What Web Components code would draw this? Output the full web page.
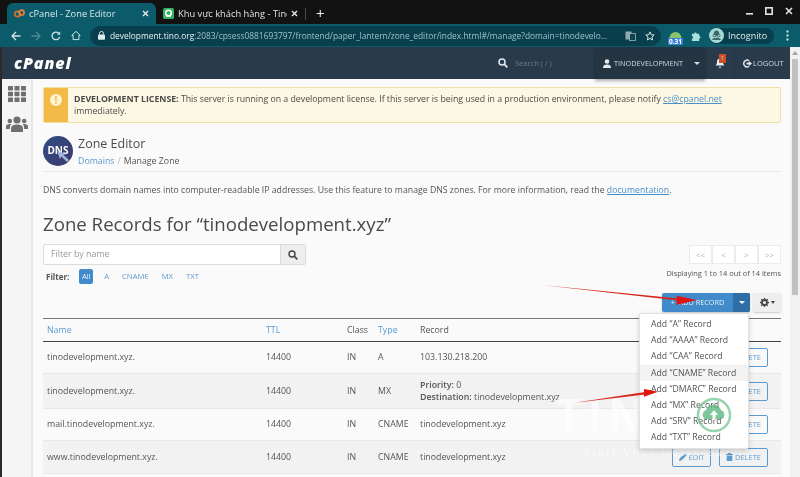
<!DOCTYPE html>
<html>
<head>
<meta charset="utf-8">
<title>cPanel - Zone Editor</title>
<style>
  html, body { margin: 0; padding: 0; height: 477px; overflow: hidden; background: #fafafa; }
  body { font-family: "Open Sans", sans-serif; display: flex; flex-direction: column; filter: blur(.3px); }
</style>
</head>
<body>
<browser-tabs></browser-tabs>
<browser-toolbar></browser-toolbar>
<cp-page>
  <cp-header></cp-header>
  <cp-sidebar slot="side"></cp-sidebar>
  <zone-editor slot="main"></zone-editor>
</cp-page>

<script>
class BrowserTabs extends HTMLElement {
  constructor() {
    super();
    this.attachShadow({mode: 'open'});
    this.shadowRoot.innerHTML = `
      <style>
        :host { display: flex; height: 24px; background: #121212; color: #e6eef0; font: 9.3px "Open Sans", sans-serif; padding-left: 7px; align-items: flex-end; flex: none; }
        .tab { display: flex; align-items: center; height: 21px; padding: 0 7px; box-sizing: border-box; }
        .tab.on { width: 149px; background: #0c5b6b; border-radius: 6px 6px 0 0; color: #d8e8ea; }
        .tab.off { width: 149px; color: #dfe3e3; }
        .label { flex: 1; white-space: nowrap; overflow: hidden; margin: 0 4px; }
        .x { flex: none; }
        .sep { width: 1px; height: 12px; background: #4a4a4a; margin: 0 0 4px 0; }
        .plus { color: #eee; font-size: 15px; line-height: 1; margin: 0 0 3px 10px; }
        .win { margin-left: auto; display: flex; align-items: center; gap: 12px; padding: 0 7px 0 0; height: 22px; align-self: flex-start; }
        svg { display: block; flex: none; }
      </style>
      <div class="tab on">
        <svg width="11" height="9" viewBox="0 0 11 9"><circle cx="3.4" cy="5" r="2.7" fill="none" stroke="#dd6f2e" stroke-width="1.7"/><circle cx="7.6" cy="3.6" r="2.5" fill="none" stroke="#e8813a" stroke-width="1.7"/></svg>
        <span class="label">cPanel - Zone Editor</span>
        <svg class="x" width="7" height="7" viewBox="0 0 7 7"><path d="M1 1l5 5M6 1l-5 5" stroke="#e8eeee" stroke-width="1.300"/></svg>
      </div>
      <div class="tab off">
        <svg width="11" height="11" viewBox="0 0 11 11"><rect width="11" height="11" rx="1.5" fill="#35b060"/><circle cx="5.5" cy="5" r="2.8" fill="none" stroke="#fff" stroke-width="1.5"/><rect x="3" y="7.4" width="5" height="1.4" fill="#fff"/></svg>
        <span class="label">Khu vực khách hàng - Tino</span>
        <svg class="x" width="7" height="7" viewBox="0 0 7 7"><path d="M1 1l5 5M6 1l-5 5" stroke="#e8eeee" stroke-width="1.300"/></svg>
      </div>
      <div class="sep"></div>
      <div class="plus">+</div>
      <div class="win">
        <svg width="7" height="8" viewBox="0 0 7 8"><rect y="6" width="7" height="1.600" fill="#e4e4e4"/></svg>
        <svg width="8" height="8" viewBox="0 0 8 8"><rect x=".8" y=".8" width="6.400" height="6.400" fill="none" stroke="#e4e4e4" stroke-width="1.600"/></svg>
        <svg width="8" height="8" viewBox="0 0 8 8"><path d="M1 1l6 6M7 1l-6 6" stroke="#e4e4e4" stroke-width="1.600"/></svg>
      </div>`;
  }
}
customElements.define('browser-tabs', BrowserTabs);

class BrowserToolbar extends HTMLElement {
  constructor() {
    super();
    this.attachShadow({mode: 'open'});
    this.shadowRoot.innerHTML = `
      <style>
        :host { display: flex; align-items: center; height: 23px; background: #0c5b6b; flex: none; font: 8.4px "Open Sans", sans-serif; color: #9fc3ca; padding-left: 11px; box-sizing: border-box; }
        svg { display: block; flex: none; }
        .nav { display: flex; align-items: center; gap: 10px; }
        .omni { display: flex; align-items: center; width: 571px; height: 20px; margin-left: 9px; padding: 0 6px 0 8px; background: #093f4d; border-radius: 10px; box-sizing: border-box; flex: none; }
        .url { flex: 1; min-width: 0; white-space: nowrap; overflow: hidden; margin-left: 5px; color: #9cc0c8; }
        .url b { font-weight: 400; color: #e6f0f2; }
        .omni .end { display: flex; gap: 9px; align-items: center; flex: none; }
        .ext { position: relative; margin-left: 7px; width: 15px; height: 19px; flex: none; }
        .ext span { position: absolute; left: 0; bottom: 0; width: 15px; height: 7px; background: #3b7fd9; color: #fff; font: 700 6.5px/7px "Open Sans", sans-serif; text-align: center; }
        .who { display: flex; align-items: center; gap: 4px; margin-left: 8px; height: 16px; width: 65px; flex: none; background: #093f4d; border-radius: 9px; color: #dfe9ea; font-size: 9px; box-sizing: border-box; }
        .dots { margin-left: 12px; }
      </style>
      <div class="nav">
        <svg width="10" height="10" viewBox="0 0 10 10"><path d="M9.500 5H1.500M5 1 1 5l4 4" fill="none" stroke="#cfe3e6" stroke-width="1.300"/></svg>
        <svg width="10" height="10" viewBox="0 0 10 10"><path d="M.5 5h8M5 1l4 4-4 4" fill="none" stroke="#4e8a96" stroke-width="1.300"/></svg>
        <svg width="10" height="10" viewBox="0 0 10 10"><path d="M8.600 5.800A3.800 3.800 0 1 1 7.600 2.200" fill="none" stroke="#cfe3e6" stroke-width="1.300"/><path d="M9.200 .5v3.200H6" fill="#cfe3e6"/></svg>
        <svg width="10" height="11" viewBox="0 0 11 11"><path d="M5.500 1 .8 5.400h1.500V10h6.400V5.400h1.500z" fill="none" stroke="#cfe3e6" stroke-width="1.100"/></svg>
      </div>
      <div class="omni">
        <svg width="7" height="9" viewBox="0 0 7 9"><rect y="3.400" width="7" height="5.400" rx=".8" fill="#dfeaec"/><path d="M1.600 3.600V2.300a1.900 1.900 0 0 1 3.800 0v1.300" fill="none" stroke="#dfeaec"/></svg>
        <span class="url"><b>development.tino.org</b>:2083/cpsess0881693797/frontend/paper_lantern/zone_editor/index.html#/manage?domain=tinodevelo...</span>
        <span class="end">
          <svg width="11" height="10" viewBox="0 0 11 10"><rect x=".5" y=".5" width="6" height="8" fill="#8fa9ae"/><rect x="4.500" y="2.500" width="6" height="7" fill="#0a4351" stroke="#9fb8bd" stroke-width=".8"/></svg>
          <svg width="10" height="10" viewBox="0 0 10 10"><path d="M5 .9 6.200 3.700l3 .3-2.300 2 .7 3L5 7.400 2.400 9l.7-3L.8 4l3-.3z" fill="none" stroke="#dbe7e9" stroke-width="1"/></svg>
        </span>
      </div>
      <div class="ext">
        <svg width="15" height="12" viewBox="0 0 15 12"><path d="M1.500 12a6 6 0 0 1 12 0z" fill="#8ac36a"/></svg>
        <span>0.31</span>
      </div>
      <svg style="margin-left:8px" width="10" height="10" viewBox="0 0 11 11"><path d="M1 3h2.400a1.400 1.400 0 1 1 2.800 0H9v2.400a1.400 1.400 0 1 1 0 2.800V11H1V8.600a1.400 1.400 0 1 0 0-2.800z" fill="#a6e3df"/></svg>
      <div class="who">
        <svg width="15" height="15" viewBox="0 0 15 15"><circle cx="7.500" cy="7.500" r="7.500" fill="#a4dbd6"/><circle cx="7.500" cy="5" r="2.600" fill="#3f6a6c"/><path d="M3 12c.6-3 8.400-3 9 0z" fill="#3f6a6c"/><circle cx="5.500" cy="7.500" r="1.500" fill="none" stroke="#2e5254" stroke-width=".8"/><circle cx="9.500" cy="7.500" r="1.500" fill="none" stroke="#2e5254" stroke-width=".8"/></svg>
        <span>Incognito</span>
      </div>
      <svg class="dots" width="3" height="11" viewBox="0 0 3 11"><circle cx="1.500" cy="1.500" r="1.200" fill="#a6dcd8"/><circle cx="1.500" cy="5.500" r="1.200" fill="#a6dcd8"/><circle cx="1.500" cy="9.500" r="1.200" fill="#a6dcd8"/></svg>`;
  }
}
customElements.define('browser-toolbar', BrowserToolbar);

class CpPage extends HTMLElement {
  constructor() {
    super();
    this.attachShadow({mode: 'open'});
    this.shadowRoot.innerHTML = `
      <style>
        :host { display: flex; flex: 1; min-height: 0; overflow: hidden; border-left: 2px solid #2b2b2b; }
        .col { flex: 1; min-width: 0; display: flex; flex-direction: column; }
        .body { flex: 1; min-height: 0; display: flex; }
        .bar { width: 10px; flex: none; background: #f1f1f1; padding: 2px 2px 0; box-sizing: border-box; }
        .bar i { display: block; width: 0; height: 0; margin: 2px auto 4px; border: 3px solid transparent; border-top: 0; border-bottom: 4px solid #a3a3a3; }
        .bar b { display: block; height: 236px; background: #c1c1c1; }
      </style>
      <div class="col">
        <slot></slot>
        <div class="body"><slot name="side"></slot><slot name="main"></slot></div>
      </div>
      <div class="bar"><i></i><b></b></div>`;
  }
}
customElements.define('cp-page', CpPage);

class CpHeader extends HTMLElement {
  constructor() {
    super();
    this.attachShadow({mode: 'open'});
    this.shadowRoot.innerHTML = `
      <style>
        :host { display: flex; align-items: stretch; height: 32px; background: #293a4b; color: #d5dbe0; font-size: 7.500px; flex: none; }
        .logo { color: #fff; font: italic 800 16px/32px "Open Sans", sans-serif; letter-spacing: .9px; margin-left: 12px; }
        .search { display: flex; align-items: center; margin-left: auto; color: #6f7d8a; }
        .search svg { margin-right: 7px; }
        .search span { width: 80px; }
        .user { display: flex; align-items: center; width: 110px; padding-left: 8px; box-sizing: border-box; background: #243443; box-shadow: 0 2px 3px rgba(0,0,0,.3); color: #d5dbe0; gap: 3px; font-size: 7.300px; }
        .user i { margin: 0 0 0 8px; width: 0; height: 0; border: 3px solid transparent; border-bottom: 0; border-top: 3px solid #d5dbe0; }
        .bell { position: relative; display: flex; align-items: center; justify-content: center; width: 29px; border-right: 1px solid #243443; }
        .bell span { position: absolute; left: 14px; top: 7px; width: 7px; height: 9px; background: #c9502a; color: #f5d5c5; font-size: 5px; line-height: 9px; text-align: center; }
        .logout { display: flex; align-items: center; gap: 1px; width: 55px; padding-left: 8px; box-sizing: border-box; }
        svg { display: block; flex: none; }
      </style>
      <div class="logo">cPanel</div>
      <div class="search">
        <svg width="10" height="10" viewBox="0 0 10 10"><circle cx="4" cy="4" r="3" fill="none" stroke="#e4e8ec" stroke-width="1.500"/><path d="M6.200 6.200 9.300 9.300" stroke="#e4e8ec" stroke-width="1.800"/></svg>
        <span>Search ( / )</span>
      </div>
      <div class="user">
        <svg width="8" height="9" viewBox="0 0 8 9"><circle cx="4" cy="2.500" r="2.300" fill="#e4e8ec"/><path d="M0 9c0-3 2-3.500 4-3.500S8 6 8 9z" fill="#e4e8ec"/></svg>
        <span>TINODEVELOPMENT</span><i></i>
      </div>
      <div class="bell">
        <svg width="10" height="11" viewBox="0 0 10 11"><path d="M5 .5c2.200 0 3 1.700 3 3.500 0 2 .8 2.700 1.500 3.500h-9C1.200 6.700 2 6 2 4 2 2.200 2.800.5 5 .5z" fill="#eef1f3"/><path d="M3.800 8.700h2.400L5 10.500z" fill="#eef1f3"/></svg>
        <span>1</span>
      </div>
      <div class="logout">
        <svg width="9" height="9" viewBox="0 0 9 9"><path d="M6 1.600A3.400 3.400 0 1 0 6 7.400" fill="none" stroke="#e4e8ec" stroke-width="1.400"/><path d="M3.500 3.500h2.500V2l3 2.500-3 2.500V5.500H3.500z" fill="#e4e8ec"/></svg>
        <span>LOGOUT</span>
      </div>`;
  }
}
customElements.define('cp-header', CpHeader);

class CpSidebar extends HTMLElement {
  constructor() {
    super();
    this.attachShadow({mode: 'open'});
    this.shadowRoot.innerHTML = `
      <style>
        :host { display: flex; flex-direction: column; align-items: center; gap: 14px; width: 31px; height: 100%; padding: 7px 0 0 0; box-sizing: border-box; background: #f5f5f5; border-right: 2px solid #e6e6e6; flex: none; }
        svg { display: block; }
      </style>
      <svg width="18" height="16" viewBox="0 0 18 16" fill="#6f6f6f">
        <rect width="5" height="4.400" rx=".6"/><rect x="6.500" width="5" height="4.400" rx=".6"/><rect x="13" width="5" height="4.400" rx=".6"/>
        <rect y="5.800" width="5" height="4.400" rx=".6"/><rect x="6.500" y="5.800" width="5" height="4.400" rx=".6"/><rect x="13" y="5.800" width="5" height="4.400" rx=".6"/>
        <rect y="11.600" width="5" height="4.400" rx=".6"/><rect x="6.500" y="11.600" width="5" height="4.400" rx=".6"/><rect x="13" y="11.600" width="5" height="4.400" rx=".6"/>
      </svg>
      <svg width="22" height="16" viewBox="0 0 22 16" fill="#6f6f6f">
        <circle cx="11" cy="4" r="3.600"/><circle cx="3.800" cy="5" r="2.300"/><circle cx="18.200" cy="5" r="2.300"/>
        <path d="M5 16v-3.500C5 10 7 8.500 11 8.500s6 1.500 6 4V16z"/><path d="M0 13v-2.500C0 9 1.500 8 3.800 8c.7 0 1.200.1 1.600.3C4.300 9.300 3.800 10.700 3.800 13z"/><path d="M22 13v-2.500C22 9 20.500 8 18.200 8c-.7 0-1.200.1-1.600.3 1.100 1 1.600 2.400 1.600 4.700z"/>
      </svg>`;
  }
}
customElements.define('cp-sidebar', CpSidebar);

class NoticeBar extends HTMLElement {
  constructor() {
    super();
    this.attachShadow({mode: 'open'});
    this.shadowRoot.innerHTML = `
      <style>
        :host { display: flex; height: 36px; box-sizing: border-box; border: 1px solid #f0dfa0; border-radius: 2px; background: #fdf8e3; color: #4a4a4a; font-size: 8.750px; line-height: 11.500px; }
        .ic { width: 24px; flex: none; background: #f2bb47; display: flex; justify-content: center; padding-top: 6px; box-sizing: border-box; }
        .ic span { width: 12px; height: 12px; border-radius: 50%; background: #fdf3d0; color: #f2bb47; font: 700 10px/12px "Open Sans", sans-serif; text-align: center; }
        .tx { padding: 6px 50px 0 6px; }
      </style>
      <div class="ic"><span>!</span></div>
      <div class="tx"><slot></slot></div>`;
  }
}
customElements.define('notice-bar', NoticeBar);

class ZoneRow extends HTMLElement {
  constructor() {
    super();
    this.attachShadow({mode: 'open'});
    const h = this.getAttribute('h') || 32;
    const on = this.hasAttribute('alt');
    this.shadowRoot.innerHTML = `
      <style>
        :host { display: grid; grid-template-columns: 219px 81px 31px 42px 1fr auto; align-items: center; height: ${h}px; box-sizing: border-box; border-bottom: 1px solid #e8e8e8; background: ${on ? '#f2f2f2' : 'transparent'}; font-size: 8.800px; line-height: 12.500px; color: #555; }
        .c { padding-left: 4px; white-space: nowrap; }
        .acts { display: flex; gap: 8px; margin-right: 13px; }
        .btn { box-sizing: border-box; height: 19px; display: flex; align-items: center; justify-content: center; gap: 2px; border: 1px solid #5c9bd1; border-radius: 2px; color: #5c9bd1; font-size: 7.500px; }
        .edit { width: 39px; }
        .del { width: 49px; }
        svg { display: block; flex: none; }
      </style>
      <div class="c">${this.getAttribute('name')}</div>
      <div class="c">14400</div>
      <div class="c">IN</div>
      <div class="c">${this.getAttribute('type')}</div>
      <div class="c"><slot></slot></div>
      <div class="acts">
        <div class="btn edit"><svg width="8" height="8" viewBox="0 0 8 8"><path d="M0 8l.6-2.400L5.800.4l1.800 1.800-5.200 5.200z" fill="#5c9bd1"/></svg>EDIT</div>
        <div class="btn del"><svg width="7" height="8" viewBox="0 0 7 8"><path d="M2.200 0h2.600l.4 1H7v1H0V1h1.800zM.7 2.500h5.600V8H.7z" fill="#5c9bd1"/></svg>DELETE</div>
      </div>`;
  }
}
customElements.define('zone-row', ZoneRow);

class RecordMenu extends HTMLElement {
  constructor() {
    super();
    this.attachShadow({mode: 'open'});
    const types = ['A', 'AAAA', 'CAA', 'CNAME', 'DMARC', 'MX', 'SRV', 'TXT'];
    const items = types.map(t => `<div class="${t === 'CNAME' ? 'hi' : ''}">Add “${t}” Record</div>`).join('');
    this.shadowRoot.innerHTML = `
      <style>
        :host { position: absolute; left: -23px; top: 20px; width: 110px; padding: 2px 0; background: #fff; border: 1px solid #e2e2e2; border-radius: 2px; box-shadow: 0 2px 5px rgba(0,0,0,.18); box-sizing: border-box; font-size: 8.700px; color: #555; z-index: 3; }
        div { height: 16.200px; line-height: 16.200px; padding-left: 11px; white-space: nowrap; }
        .hi { background: #f3f3f3; }
      </style>
      ${items}`;
  }
}
customElements.define('record-menu', RecordMenu);

class ZoneEditor extends HTMLElement {
  constructor() {
    super();
    this.attachShadow({mode: 'open'});
    this.shadowRoot.innerHTML = `
      <style>
        :host { display: block; flex: 1; min-width: 0; position: relative; padding: 8px 9px 0 10px; box-sizing: border-box; color: #555; font-size: 8.800px; overflow: hidden; }
        .title { display: flex; gap: 5px; height: 34px; align-items: center; margin-top: 11px; padding-bottom: 3px; border-bottom: 1px solid #e8e8e8; }
        .dns { position: relative; width: 30px; height: 30px; border-radius: 50%; flex: none; background: linear-gradient(135deg, #2f4d84, #3a3f73 70%); color: #fff; font: 700 10px/28px "Open Sans", sans-serif; text-align: center; overflow: hidden; }
        .dns svg { position: absolute; left: 14px; top: 15px; }
        h2 { margin: 0; font-weight: 400; font-size: 12.500px; line-height: 18px; color: #4b4b4b; }
        .crumb { margin-top: 2px; line-height: 13px; color: #555; }
        .crumb a { color: #5c9bd1; }
        .crumb i { font-style: normal; color: #bbb; margin: 0 3px; }
        .desc { margin: 12px 0 0; line-height: 13px; white-space: nowrap; font-size: 8.720px; }
        .desc a { color: #4a90c8; text-decoration: underline; }
        h1 { margin: 13px 0 0; font-weight: 400; font-size: 18.650px; line-height: 28px; color: #4a4a4a; white-space: nowrap; }
        .tools { display: flex; justify-content: space-between; margin-top: 6px; }
        .search { display: flex; width: 263px; height: 21px; box-sizing: border-box; border: 1px solid #dcdcdc; border-radius: 2px; background: #fff; color: #999; }
        .search span { flex: 1; padding-left: 7px; line-height: 19px; }
        .search b { width: 24px; background: #eee; border-left: 1px solid #dcdcdc; display: flex; align-items: center; justify-content: center; }
        .filter { display: flex; align-items: center; margin: 3.500px 0 0 3px; height: 15px; font-size: 7.700px; color: #5c9bd1; }
        .filter strong { color: #555; font-size: 8px; margin-right: 10px; }
        .filter .on { background: #428bca; color: #e8f1f8; padding: 0 2.500px; height: 15px; line-height: 15px; border-radius: 2px; margin-right: 11px; }
        .filter span { margin-right: 13px; }
        .right { text-align: right; width: 130px; padding-top: 1px; }
        .pager { display: flex; justify-content: flex-end; }
        .pager span { width: 23px; height: 19px; box-sizing: border-box; border: 1px solid #ececec; background: #fff; color: #b5b5b5; font-size: 8px; line-height: 17px; text-align: center; }
        .shown { margin-top: 3px; font-size: 7.400px; line-height: 13px; white-space: nowrap; }
        .actions { display: flex; justify-content: flex-end; gap: 3px; margin-top: 9.500px; }
        .add { position: relative; display: flex; height: 19px; width: 88px; color: #e8f1f8; font-size: 7.300px; border-radius: 2px; background: #428bca; box-shadow: 0 1px 2px rgba(0,0,0,.2); }
        .add span { flex: 1; line-height: 19px; text-align: center; white-space: nowrap; }
        .add u { width: 17px; background: #2f6fa8; border-radius: 0 2px 2px 0; display: flex; align-items: center; justify-content: center; }
        .add u::after { content: ""; border: 3px solid transparent; border-bottom: 0; border-top: 3px solid #fff; }
        .gear { width: 28px; height: 19px; background: #eee; border-radius: 2px; display: flex; align-items: center; justify-content: center; gap: 2px; box-shadow: 0 1px 2px rgba(0,0,0,.2); }
        .gear::after { content: ""; border: 2.500px solid transparent; border-bottom: 0; border-top: 3px solid #444; }
        .head { display: grid; grid-template-columns: 219px 81px 31px 42px 1fr; align-items: center; height: 24px; margin-top: 6px; box-sizing: border-box; border-top: 1px solid #777; border-bottom: 1px solid #444; }
        .head div { padding-left: 4px; }
        .head .s { color: #5c9bd1; }
        svg { display: block; }
        .marks { position: absolute; left: 0; top: 0; width: 757px; height: 398px; pointer-events: none; z-index: 5; }
        .brand { position: absolute; left: 523px; top: 312px; color: rgba(255,255,255,.6); font: 700 44px/46px "Open Sans", sans-serif; letter-spacing: 6px; z-index: 1; white-space: nowrap; }
        .slog { position: absolute; left: 550px; top: 365px; color: rgba(255,255,255,.6); font: 13px/16px "Liberation Serif", serif; letter-spacing: 2px; z-index: 1; white-space: nowrap; }
      </style>
      <notice-bar><b style="font-weight:700">DEVELOPMENT LICENSE:</b> This server is running on a development license. If this server is being used in a production environment, please notify <a style="color:#4a90c8;text-decoration:underline">cs@cpanel.net</a> immediately.</notice-bar>
      <div class="title">
        <div class="dns">DNS<svg width="14" height="13" viewBox="0 0 14 13"><path d="M0 0l3 8 1.500-2.500L10 11l2-2-5.500-5L9 3z" fill="#9fb4d6"/></svg></div>
        <div><h2>Zone Editor</h2><div class="crumb"><a>Domains</a><i>/</i>Manage Zone</div></div>
      </div>
      <p class="desc">DNS converts domain names into computer-readable IP addresses. Use this feature to manage DNS zones. For more information, read the <a>documentation</a>.</p>
      <h1>Zone Records for “tinodevelopment.xyz”</h1>
      <div class="tools">
        <div>
          <div class="search"><span>Filter by name</span><b><svg width="10" height="10" viewBox="0 0 10 10"><circle cx="4" cy="4" r="3" fill="none" stroke="#444" stroke-width="1.400"/><path d="M6.200 6.200 9.300 9.300" stroke="#444" stroke-width="1.700"/></svg></b></div>
          <div class="filter"><strong>Filter:</strong><span class="on">All</span><span>A</span><span>CNAME</span><span>MX</span><span>TXT</span></div>
        </div>
        <div class="right">
          <div class="pager"><span>&lt;&lt;</span><span>&lt;</span><span>&gt;</span><span>&gt;&gt;</span></div>
          <div class="shown">Displaying 1 to 14 out of 14 items</div>
        </div>
      </div>
      <div class="actions">
        <div class="add"><span>+ &nbsp;ADD RECORD</span><u></u><record-menu></record-menu></div>
        <div class="gear"><svg width="9" height="9" viewBox="0 0 9 9"><circle cx="4.500" cy="4.500" r="2.500" fill="none" stroke="#444" stroke-width="1.800"/><path d="M4.500 0v1.500M4.500 7.500V9M0 4.500h1.500M7.500 4.500H9M1.300 1.300l1 1M6.700 6.700l1 1M7.700 1.300l-1 1M2.300 6.700l-1 1" stroke="#444" stroke-width="1.300"/></svg></div>
      </div>
      <div class="head"><div class="s">Name</div><div class="s">TTL</div><div>Class</div><div class="s">Type</div><div>Record</div></div>
      <zone-row name="tinodevelopment.xyz." type="A">103.130.218.200</zone-row>
      <zone-row alt h="35" name="tinodevelopment.xyz." type="MX"><b style="font-weight:600">Priority:</b> 0<br><b style="font-weight:600">Destination:</b> tinodevelopment.xyz</zone-row>
      <zone-row h="32" name="mail.tinodevelopment.xyz." type="CNAME">tinodevelopment.xyz</zone-row>
      <zone-row alt h="33" name="www.tinodevelopment.xyz." type="CNAME">tinodevelopment.xyz</zone-row>
      <div class="brand">TINO</div>
      <div class="slog">Start Your Business</div>
      <svg class="marks" viewBox="0 0 757 398">
        <path d="M508.700 206 L645 219.500 L645 221.500 z" fill="#d9261c"/>
        <path d="M663.700 221 L643.700 216.700 L643.700 226 z" fill="#e0140f"/>
        <path d="M540 324 L612 313 L612 315.500 z" fill="#d9261c"/>
        <path d="M625 312.700 L611 310 L611 317.700 z" fill="#e0140f"/>
        <circle cx="681" cy="336" r="16" fill="none" stroke="#7cc99a" stroke-width="2.500" opacity=".8"/>
        <path d="M672 340a5 5 0 0 1 1-9 8 8 0 0 1 15 0 5 5 0 0 1 1 9z" fill="#5cb87f" opacity=".8"/>
        <path d="M681 331l-4 5h2.500v5h3v-5h2.500z" fill="#fff"/>
      </svg>`;
  }
}
customElements.define('zone-editor', ZoneEditor);
</script>
</body>
</html>
